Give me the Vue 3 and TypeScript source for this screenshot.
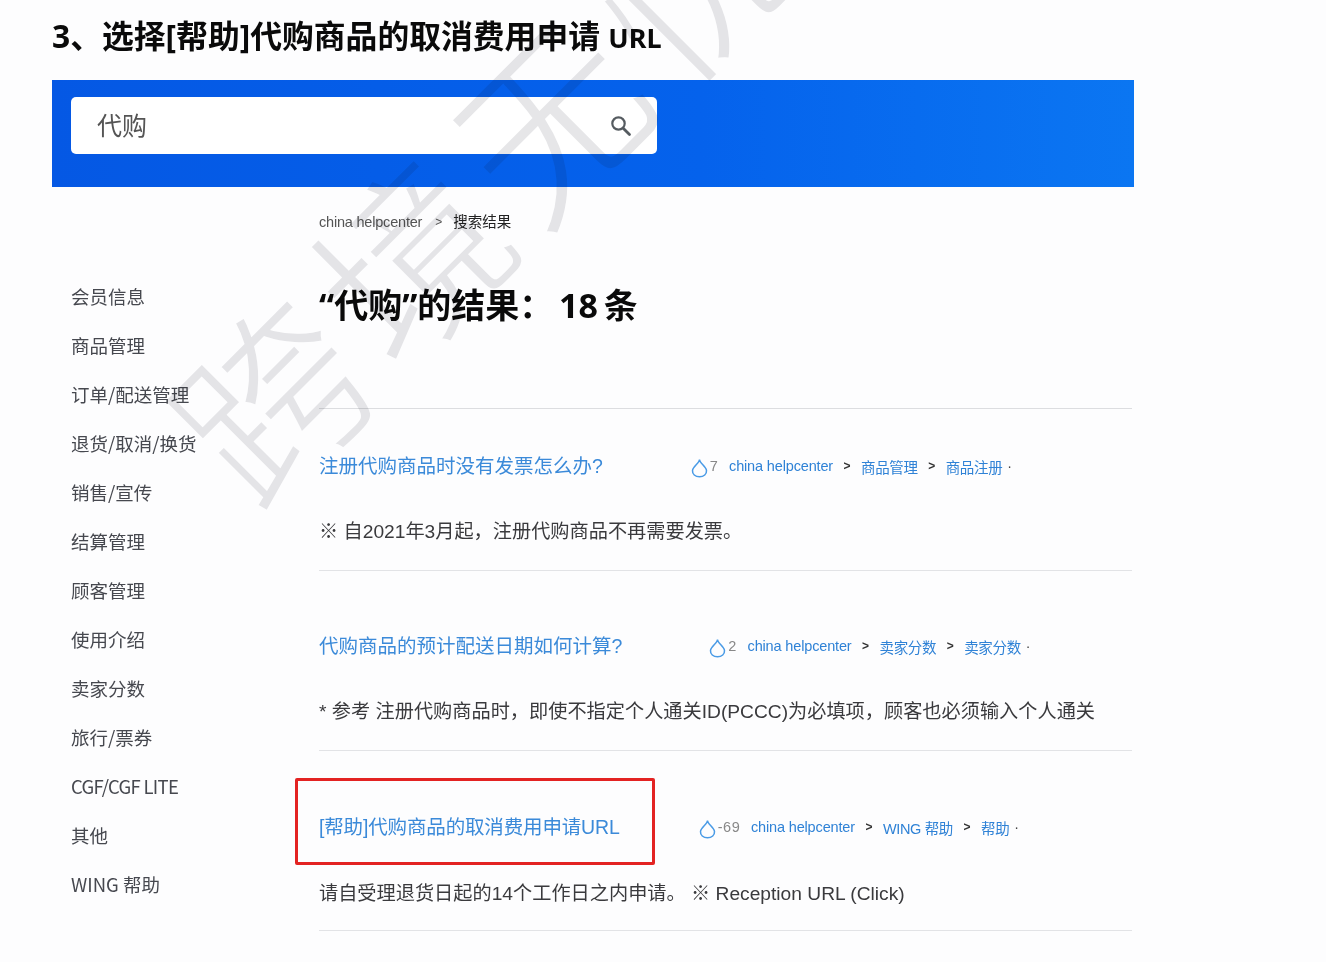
<script setup lang="ts">
interface Result {
  title: string
  likes: string
  cat: string
  sub: string
  desc: string
  gap: number
  boxed?: boolean
}
const nav: string[] = ['会员信息', '商品管理', '订单/配送管理', '退货/取消/换货', '销售/宣传', '结算管理', '顾客管理', '使用介绍', '卖家分数', '旅行/票券', 'CGF/CGF LITE', '其他', 'WING 帮助']
const results: Result[] = [
  { title: '注册代购商品时没有发票怎么办?', likes: '7', cat: '商品管理', sub: '商品注册', desc: '※ 自2021年3月起，注册代购商品不再需要发票。', gap: 88 },
  { title: '代购商品的预计配送日期如何计算?', likes: '2', cat: '卖家分数', sub: '卖家分数', desc: '* 参考 注册代购商品时，即使不指定个人通关ID(PCCC)为必填项，顾客也必须输入个人通关', gap: 87 },
  { title: '[帮助]代购商品的取消费用申请URL', likes: '-69', cat: 'WING 帮助', sub: '帮助', desc: '请自受理退货日起的14个工作日之内申请。 ※ Reception URL (Click)', gap: 79, boxed: true },
]
</script>

<template>
  <div class="page">
    <h1 class="page-title">3、选择[帮助]代购商品的取消费用申请 <span class="url">URL</span></h1>
    <header class="band">
      <div class="search">
        <span class="query">代购</span>
        <svg class="search-icon" width="24" height="24" viewBox="0 0 24 24" fill="none" stroke="#555b60" stroke-linecap="round">
          <circle cx="9.5" cy="9.5" r="6.2" stroke-width="2.2" />
          <path d="M14.2 14.2 20.5 20.5" stroke-width="2.8" />
        </svg>
      </div>
    </header>
    <div class="body">
      <nav class="side">
        <a v-for="n in nav" :key="n" class="side-item" :class="{ tight: n.startsWith('CGF') }">{{ n }}</a>
      </nav>
      <main class="main">
        <div class="crumb"><span class="crumb-root">china helpcenter</span><span class="crumb-sep">&gt;</span><span class="crumb-now">搜索结果</span></div>
        <h2 class="heading">“代购”的结果： 18 条</h2>
        <section class="list">
          <article v-for="r in results" :key="r.title" class="item" :class="{ 'item-boxed': r.boxed }">
            <div class="row">
              <a class="item-title" :style="{ marginRight: r.gap + 'px' }">{{ r.title }}</a>
              <svg class="drop" width="17" height="20" viewBox="0 0 17 20" fill="none" stroke="#4a9be6" stroke-width="1.5">
                <path d="M8.5 1.5C8.5 5 2 8.5 1.5 12.5 1.2 16 4.2 18.8 8.5 18.8S15.8 16 15.5 12.5C15 8.5 8.5 5 8.5 1.5Z" />
              </svg>
              <span class="likes">{{ r.likes }}</span>
              <span class="path path-root">china helpcenter</span>
              <span class="sep">&gt;</span>
              <span class="path">{{ r.cat }}</span>
              <span class="sep">&gt;</span>
              <span class="path">{{ r.sub }}</span>
              <span class="dot">·</span>
              <div v-if="r.boxed" class="red-box"></div>
            </div>
            <p class="desc">{{ r.desc }}</p>
          </article>
        </section>
      </main>
    </div>
    <div class="watermark" aria-hidden="true">跨境无忧</div>
  </div>
</template>

<style>
html, body { margin: 0; background: #fdfdfe; }
</style>

<style scoped>
.page {
  position: relative;
  width: 1326px;
  height: 962px;
  overflow: hidden;
  box-sizing: border-box;
  padding: 14px 192px 0 52px;
  font-family: "Liberation Sans", "Noto Sans CJK SC", sans-serif;
  background: #fdfdfe;
}
.page-title {
  margin: 0;
  height: 44px;
  line-height: 44px;
  font-family: "Noto Sans", "Noto Sans CJK SC", sans-serif;
  font-size: 31.8px;
  font-weight: 700;
  color: #0a0a0a;
  white-space: nowrap;
}
.url { font-size: 27px; }
.band {
  margin-top: 22px;
  height: 107px;
  box-sizing: border-box;
  padding: 17px 19px;
  background: linear-gradient(90deg, #0558e4 0%, #0562ec 60%, #0b76f2 100%);
}
.search {
  width: 586px;
  height: 57px;
  box-sizing: border-box;
  padding: 0 24px 0 26px;
  display: flex;
  align-items: center;
  justify-content: space-between;
  background: #fff;
  border-radius: 5px;
}
.query { font-size: 25px; color: #555; padding-bottom: 4px; }
.body { display: flex; }
.side {
  width: 267px;
  flex: none;
  box-sizing: border-box;
  padding: 85px 0 0 19px;
  display: flex;
  flex-direction: column;
}
.side-item {
  height: 49px;
  line-height: 49px;
  font-family: "Noto Sans CJK SC", sans-serif;
  font-size: 18.5px;
  color: #46484f;
  white-space: nowrap;
}
.tight { letter-spacing: -0.7px; }
.main { flex: 1; min-width: 0; padding-top: 25px; margin-right: 2px; }
.crumb {
  height: 20px;
  line-height: 20px;
  font-size: 14.5px;
  display: flex;
  align-items: center;
  color: #555;
}
.crumb-root { letter-spacing: -0.2px; }
.crumb-sep { margin: 0 11px 0 13px; font-size: 12px; }
.crumb-now { color: #222; }
.heading {
  margin: 51px 0 81px;
  height: 44px;
  line-height: 44px;
  font-family: "Noto Sans", "Noto Sans CJK SC", sans-serif;
  font-size: 34px;
  font-weight: 700;
  word-spacing: -3px;
  color: #0a0a0a;
}
.list { border-top: 1px solid #dcdde0; }
.item { padding: 63px 0 26px; border-bottom: 1px solid #e2e3e6; }
.item:first-child { padding-top: 45px; }
.row {
  position: relative;
  display: flex;
  align-items: center;
  height: 24px;
  white-space: nowrap;
}
.item-title { font-size: 19.5px; color: #3b8ad9; padding-bottom: 4px; }
.drop { margin-right: 2px; flex: none; position: relative; top: 2px; }
.likes { font-size: 14.5px; letter-spacing: 0.6px; color: #888; margin-right: 10.5px; }
.path { font-size: 14.5px; color: #2f82d6; letter-spacing: -0.35px; }
.path-root { letter-spacing: -0.15px; }
.sep { font-size: 12px; font-weight: 700; color: #333; margin: 0 10.5px; }
.dot { font-size: 14px; color: #444; margin-left: 5px; }
.red-box {
  position: absolute;
  left: -24px;
  top: -37px;
  width: 360px;
  height: 87px;
  box-sizing: border-box;
  border: 3px solid #e32322;
  border-radius: 2px;
}
.desc {
  margin: 42px 0 0;
  height: 24px;
  line-height: 24px;
  font-size: 19.2px;
  color: #3a3a3d;
  white-space: nowrap;
}
.item-boxed { padding: 64px 0 24px; }
.item-boxed .item-title { letter-spacing: -0.15px; }
.item-boxed .desc { margin-top: 43px; }
.watermark {
  position: absolute;
  left: 172px;
  top: 302px;
  font-family: "Noto Sans CJK SC", sans-serif;
  font-size: 185px;
  line-height: 1;
  letter-spacing: 13px;
  white-space: nowrap;
  color: #e6e6e8;
  -webkit-text-stroke: 4px #fff;
  mix-blend-mode: multiply;
  transform: rotate(-45deg);
  transform-origin: 92px 92px;
  pointer-events: none;
}
</style>
